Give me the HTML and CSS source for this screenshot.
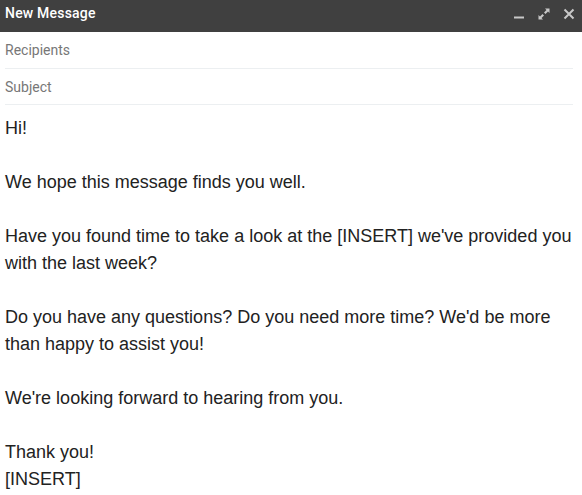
FILE: index.html
```html
<!DOCTYPE html>
<html lang="en">
<head>
    <meta charset="UTF-8">
    <meta name="viewport" content="width=device-width, initial-scale=1.0">
    <title>New Message</title>
    <link rel="stylesheet" href="styles.css">
</head>

<body>
    <div class="compose">
        <header class="compose-header">
            <span class="compose-title">New Message</span>
            <div class="header-actions">
                <!-- minimise -->
                <svg class="icon" viewBox="0 0 14 14" width="14" height="14">
                    <rect x="2" y="9.5" width="10" height="2" fill="#c8c8c8"/>
                </svg>
                <!-- full screen -->
                <svg class="icon" viewBox="0 0 14 14" width="14" height="14">
                    <path d="M8 1.5h4.5V6L11 4.5 8.5 7 7 5.5 9.5 3z M6 12.5H1.5V8L3 9.5 5.5 7 7 8.5 4.5 11z" fill="#c8c8c8"/>
                </svg>
                <!-- close -->
                <svg class="icon" viewBox="0 0 14 14" width="14" height="14">
                    <path d="M2.5 2.5l9 9M11.5 2.5l-9 9" stroke="#c8c8c8" stroke-width="2"/>
                </svg>
            </div>
        </header>

        <div class="field">Recipients</div>
        <div class="field">Subject</div>

        <div class="message">
            <p>Hi!</p>
            <p>We hope this message finds you well.</p>
            <p>Have you found time to take a look at the [INSERT] we've provided you with the last week?</p>
            <p>Do you have any questions? Do you need more time? We'd be more than happy to assist you!</p>
            <p>We're looking forward to hearing from you.</p>
            <p>Thank you!<br>[INSERT]</p>
        </div>
        <div class="bottom-shade"></div>
    </div>
</body>
</html>
```

FILE: styles.css
```css
body {
    margin: 0;
    padding: 0;
    background: #fff;
    font-family: Roboto, Arial, sans-serif;
    overflow: hidden;
}

.compose {
    width: 582px;
    height: 495px;
    overflow: hidden;
}

.compose-header {
    background-color: #404040;
    height: 32px;
    display: flex;
    align-items: center;
    justify-content: space-between;
    padding: 0 6px 0 5px;
}

.compose-title {
    color: #fff;
    font-size: 14px;
    font-weight: 500;
    letter-spacing: 0.2px;
    margin-top: -6px;
}

.header-actions {
    display: flex;
    gap: 11px;
    margin-top: -4px;
}

.icon {
    display: block;
}

.field {
    margin: 0 9px 0 5px;
    height: 36px;
    line-height: 36px;
    font-size: 14px;
    color: #777;
    border-bottom: 1px solid #eceff1;
}

.field + .field {
    height: 35px;
}

.message {
    padding: 10px 5px 0 5px;
    font-family: "Liberation Sans", Arial, sans-serif;
    font-size: 18px;
    line-height: 27px;
    color: #222;
}

.message p {
    margin: 0 0 27px 0;
}

.message p:last-child {
    margin-bottom: 0;
}

.bottom-shade {
    margin: 2px 7px 0 5px;
    height: 6px;
    background: #f8f8f8;
}
```
